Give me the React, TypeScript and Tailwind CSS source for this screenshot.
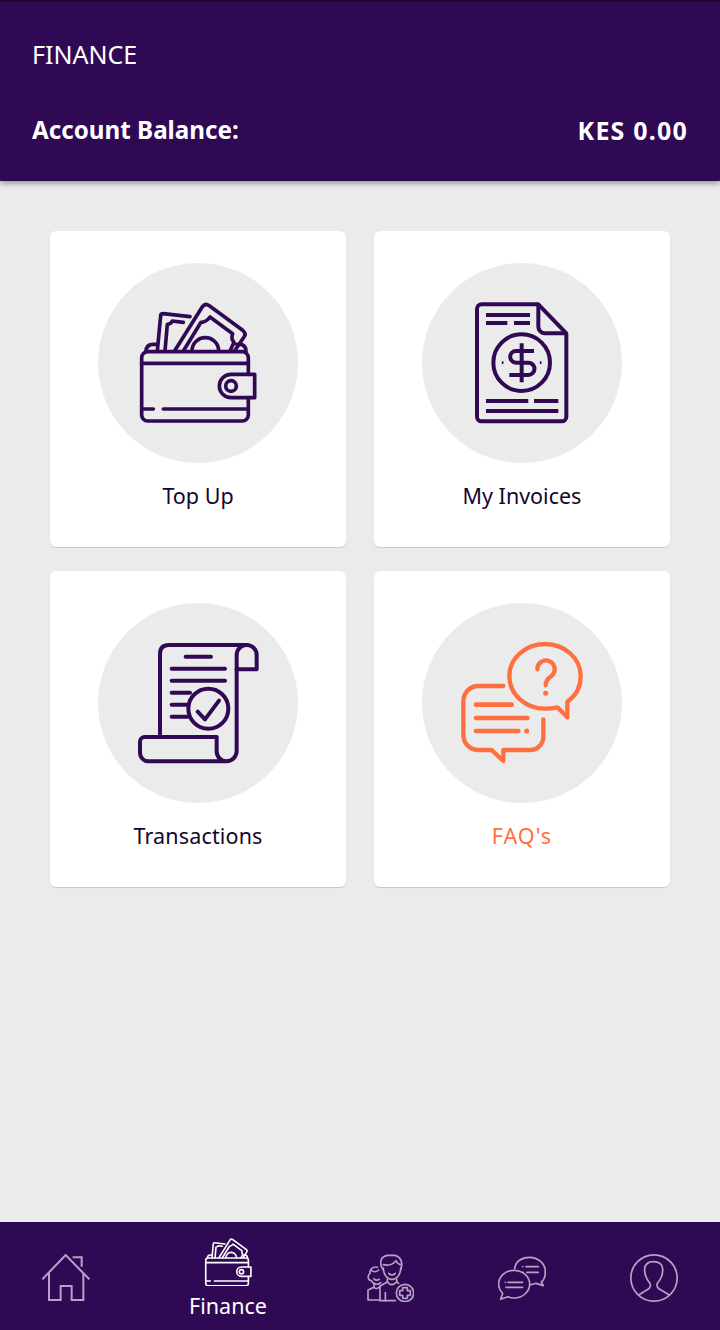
import React from 'react';

const PURPLE = '#300955';
const ORANGE = '#ff6f3f';
const NAV_ICON = '#b5a3c5';
const FONT = "font-['Noto_Sans',sans-serif]";

type IconProps = { color?: string };

// all big icons are traced in 3x crop units, so the viewBox sits around the grey circle
const WalletShapes = () => (
  <>
    <path d="M385 268V218a18 18 0 0 0-18-18H83a18 18 0 0 0-18 18V390a18 18 0 0 0 18 18H367a18 18 0 0 0 18-18V338" />
    <path d="M65 235H385" />
    <path d="M404 268H333a35 35 0 0 0 0 70H404Z" />
    <circle cx="333" cy="303" r="16" />
    <path d="M65 372H100M130 372H385" />
    <path d="M78 200Q78 178 100 178H112" />
    <path d="M350 178H358Q378 178 378 200" />
    <path d="M112 198L122 92Q122 86 130 86L210 95" />
    <path d="M135 198L142 118Q152 118 157 108L190 112" />
    <path d="M165 196L248 64Q256 54 268 62L368 136Q380 146 372 156L345 196" />
    <path d="M190 198L243 112Q258 112 270 96L338 146Q332 162 342 172L330 198" />
    <path d="M216 198a40 40 0 0 1 80 0" />
  </>
);

const WalletIcon = ({ color = PURPLE }: IconProps) => (
  <svg width="200" height="200" viewBox="-66 -66 600 600" fill="none" stroke={color} strokeWidth="11" strokeLinecap="round" strokeLinejoin="round">
    <WalletShapes />
  </svg>
);

const InvoiceIcon = () => (
  <svg width="200" height="200" viewBox="-84 -66 600 600" fill="none" stroke={PURPLE} strokeWidth="12" strokeLinejoin="round">
    <path d="M265 58H95a14 14 0 0 0-14 14V395a14 14 0 0 0 14 14H335a14 14 0 0 0 14-14V145Z" />
    <path d="M265 58V125a20 20 0 0 0 20 20H349" />
    <path d="M108 90H240M108 114H172M192 114H240M108 348H235M252 348H325M108 378H325" />
    <circle cx="215" cy="233" r="85" />
    <path d="M252 198H198a17 17 0 0 0 0 35H235a17 17 0 0 1 0 37H178M215 175V292" />
    <path d="M158 229V237M272 229V237" strokeWidth="5" />
  </svg>
);

const ReceiptIcon = () => (
  <svg width="200" height="200" viewBox="-81 -81 600 600" fill="none" stroke={PURPLE} strokeWidth="12" strokeLinecap="round" strokeLinejoin="round">
    <path d="M105 315V72Q105 45 132 45H365a30 30 0 0 1 30 30V118H335" />
    <path d="M335 118V75a30 30 0 0 1 30-30" />
    <path d="M335 118V362a31 31 0 0 1-31 32H70a25 25 0 0 1-25-25V335a14 14 0 0 1 14-14H275V362a30 30 0 0 0 30 32" />
    <path d="M182 80H258M140 116H300M140 152H300M140 188H195M140 224H188M140 260H190" />
    <circle cx="250" cy="236" r="60" />
    <path d="M218 245L240 268L282 212" />
  </svg>
);

const FaqIcon = () => (
  <svg width="200" height="200" viewBox="-84 -81 600 600" fill="none" stroke={ORANGE} strokeWidth="13" strokeLinecap="round" strokeLinejoin="round">
    <path d="M322 232Q305 236 285 236C225 236 178 192 178 138C178 86 225 42 285 42C345 42 392 86 392 138C392 170 378 197 352 215V262Z" />
    <path d="M262 118a26 26 0 1 1 42 20c-12 8-17 14-17 28" />
    <path d="M287 190V190.1" strokeWidth="15" />
    <path d="M160 168H85a45 45 0 0 0-45 45V315a45 45 0 0 0 45 45H125L160 393V360H240a40 40 0 0 0 40-40V268" />
    <path d="M78 224H185M78 264H232M78 303H205" strokeWidth="14" />
    <path d="M230 303V303.1" strokeWidth="15" />
  </svg>
);

const HomeIcon = () => (
  <svg width="48" height="48" viewBox="126 102 144 144" fill="none" stroke={NAV_ICON} strokeWidth="6">
    <path d="M127 178L197 105L268 178" />
    <path d="M218 112H245V140" />
    <path d="M147 158V240H182V198H215V240H250V158" />
  </svg>
);

const NavWalletIcon = () => (
  <svg width="48" height="48" viewBox="52 50 360 360" fill="none" stroke="#ffffff" strokeWidth="12" strokeLinecap="round" strokeLinejoin="round">
    <WalletShapes />
  </svg>
);

const FamilyIcon = () => (
  <svg width="48" height="48" viewBox="48 42 144 144" fill="none" stroke={NAV_ICON} strokeWidth="5" strokeLinecap="round" strokeLinejoin="round">
    <path d="M100 90C88 74 88 50 112 46H135C152 50 160 68 152 90" />
    <path d="M100 74C115 78 130 72 138 62C142 70 148 74 153 74" />
    <path d="M100 84C100 104 112 118 126 118C140 118 152 104 152 84" />
    <path d="M116 100Q126 110 136 100" />
    <path d="M112 118V126L90 138V182H136" />
    <path d="M112 126Q125 142 140 126V118" />
    <path d="M140 126L146 130" />
    <path d="M106 182V158" />
    <circle cx="165" cy="159" r="26" />
    <path d="M158 143H172V152H181V166H172V175H158V166H149V152H158Z" />
    <path d="M82 82C70 78 58 88 60 100C52 106 52 120 64 122C70 134 84 136 92 128" />
    <path d="M64 92C70 96 80 96 86 90" />
    <path d="M72 116Q78 124 88 118" />
    <path d="M72 134V142L54 150V180H90" />
    <path d="M72 142Q78 150 90 140" />
  </svg>
);

const ChatIcon = () => (
  <svg width="48" height="48" viewBox="54 42 144 144" fill="none" stroke={NAV_ICON} strokeWidth="5" strokeLinecap="round" strokeLinejoin="round">
    <path d="M104 86C106 64 126 52 148 52C174 52 196 70 196 95C196 110 192 120 184 126L190 137L168 130Q160 134 149 134" />
    <path d="M102 91C128 91 149 109 149 132C149 156 128 174 102 174C96 174 90 173 84 170L62 178L68 160C60 152 56 143 56 132C56 109 76 91 102 91Z" />
    <path d="M84 127H128M78 142H128M138 80H175M140 97H175" />
    <path d="M76 127V127.1M128 80V80.1M130 97V97.1" />
  </svg>
);

const ProfileIcon = () => (
  <svg width="48" height="48" viewBox="450 42 144 144" fill="none" stroke={NAV_ICON} strokeWidth="5" strokeLinejoin="round">
    <circle cx="522" cy="114" r="69.5" />
    <path d="M476 165L505 147Q514 140 510 130Q492 108 494 84Q498 65 520 65Q546 65 548 86Q550 108 532 130Q528 140 538 147L568 165" />
  </svg>
);

type CardProps = { label: string; icon: React.ReactNode; labelClass?: string };

const Card = ({ label, icon, labelClass = 'text-[#14062e]' }: CardProps) => (
  <div className="flex h-[316px] flex-col items-center rounded-md bg-white pt-8 shadow-[0_1px_1px_rgba(0,0,0,0.15)]">
    <div className="h-[200px] w-[200px] rounded-full bg-[#ebebeb]">{icon}</div>
    <span className={`mt-[17px] text-[21.5px] leading-[32px] ${labelClass}`}>{label}</span>
  </div>
);

export default function App() {
  return (
    <div className={`flex h-[1330px] w-[720px] flex-col overflow-hidden bg-[#ebebeb] ${FONT}`}>
      <header className="z-10 flex h-[181px] flex-col border-t-2 border-[#1d0535] bg-[#300955] px-8 text-white shadow-[0_2px_6px_rgba(0,0,0,0.4)]">
        <h1 className="mt-[34px] text-[25px] font-normal leading-[36px]">FINANCE</h1>
        <div className="mt-[40px] flex items-center justify-between font-bold leading-[36px]">
          <span className="text-[24.2px]">Account Balance:</span>
          <span className="text-[25px] tracking-[1.2px]">KES 0.00</span>
        </div>
      </header>

      <main className="grid flex-1 grid-cols-2 content-start gap-x-7 gap-y-6 px-[50px] pt-[50px]">
        <Card label="Top Up" icon={<WalletIcon />} />
        <Card label="My Invoices" icon={<InvoiceIcon />} />
        <Card label="Transactions" icon={<ReceiptIcon />} labelClass="text-[#14062e] tracking-[0.15px]" />
        <Card label="FAQ's" icon={<FaqIcon />} labelClass="text-[#ff6f3f] tracking-[1px]" />
      </main>

      <nav className="flex h-[108px] bg-[#300955]">
        <div className="flex w-[132px] justify-center pt-8">
          <HomeIcon />
        </div>
        <div className="flex w-[192px] flex-col items-center pt-4">
          <NavWalletIcon />
          <span className="mt-[4px] text-[21.5px] leading-[32px] text-white">Finance</span>
        </div>
        <div className="flex w-[132px] justify-center pt-8">
          <FamilyIcon />
        </div>
        <div className="flex w-[132px] justify-center pt-8">
          <ChatIcon />
        </div>
        <div className="flex w-[132px] justify-center pt-8">
          <ProfileIcon />
        </div>
      </nav>
    </div>
  );
}
